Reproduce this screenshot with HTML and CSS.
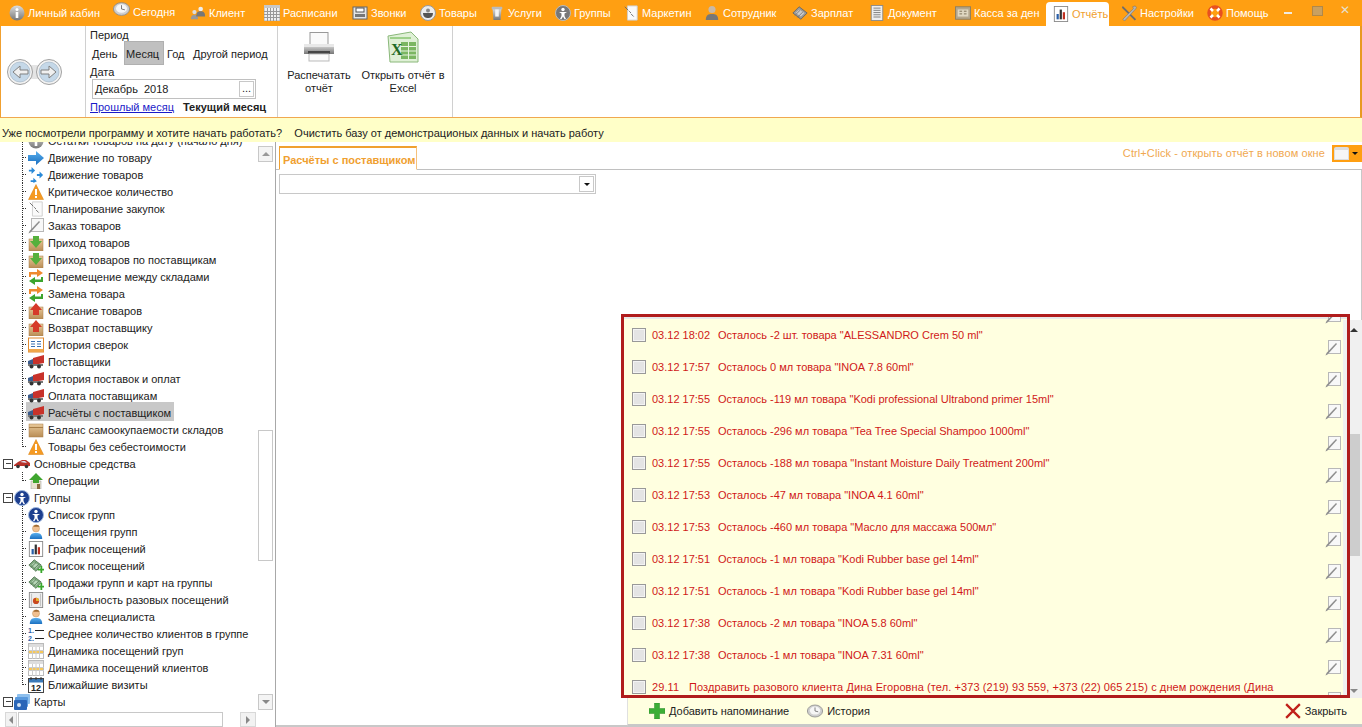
FILE: index.html
```html
<!DOCTYPE html>
<html lang="ru">
<head>
    <meta charset="UTF-8">
    <title>Отчёты</title>
    <link rel="stylesheet" href="styles.css">
</head>
<body>
    <!-- icon set -->
    <svg class="defs" width="0" height="0">
        <defs>
            <linearGradient id="g-box" x1="0" y1="0" x2="0" y2="1"><stop offset="0" stop-color="#e8c99a"/><stop offset="1" stop-color="#b98d55"/></linearGradient>
            <linearGradient id="g-gray" x1="0" y1="0" x2="0" y2="1"><stop offset="0" stop-color="#dcdcdc"/><stop offset="1" stop-color="#777"/></linearGradient>
            <linearGradient id="g-blue" x1="0" y1="0" x2="0" y2="1"><stop offset="0" stop-color="#5ab0ee"/><stop offset="1" stop-color="#1a6fc0"/></linearGradient>
            <symbol id="i-info" viewBox="0 0 16 16"><circle cx="8" cy="8" r="7.5" fill="url(#g-gray)"/><circle cx="8" cy="4.5" r="1.5" fill="#fff"/><rect x="6.7" y="7" width="2.6" height="6" fill="#fff"/></symbol>
            <symbol id="i-clock" viewBox="0 0 20 16"><ellipse cx="10" cy="8" rx="9.5" ry="7.5" fill="#cfcfcf" stroke="#8a8a8a"/><ellipse cx="10" cy="7.5" rx="6.5" ry="5" fill="#f6f6f6"/><path d="M10 3.5V8l4 1" stroke="#666" fill="none"/></symbol>
            <symbol id="i-people" viewBox="0 0 18 16"><circle cx="5" cy="7" r="2.4" fill="#ddd"/><path d="M1 15c0-4 2-5 4-5s4 1 4 5z" fill="#999"/><circle cx="12" cy="3.5" r="2.6" fill="#eee"/><path d="M7 12c0-5 2-6 5-6s5 1 5 6z" fill="#777"/></symbol>
            <symbol id="i-grid" viewBox="0 0 16 16"><rect width="16" height="16" fill="#f0f0f0" stroke="#aaa"/><rect y="0" width="16" height="3" fill="#c8c8c8"/><path d="M0 6.500h16M0 9.500h16M0 12.500h16M3.500 3v13M6.500 3v13M9.500 3v13M12.500 3v13" stroke="#999"/></symbol>
            <symbol id="i-phone" viewBox="0 0 16 16"><rect x="1" y="2" width="14" height="12" fill="#e5e5e5" stroke="#666"/><rect x="4" y="3" width="8" height="4" fill="#fff" stroke="#555"/><rect x="3" y="9" width="10" height="3" fill="#777"/></symbol>
            <symbol id="i-bowl" viewBox="0 0 16 16"><circle cx="8" cy="8" r="7.5" fill="#ececec" stroke="#999"/><path d="M3 8h10c0 4-2.500 5-5 5S3 12 3 8z" fill="#555"/><circle cx="8" cy="5.500" r="2" fill="#888"/></symbol>
            <symbol id="i-service" viewBox="0 0 16 18"><path d="M3 4h10l-1 13H4z" fill="url(#g-gray)"/><rect x="2" y="2" width="12" height="3" rx="1" fill="#bbb"/><rect x="6" y="5" width="4" height="8" fill="#f4f4f4"/></symbol>
            <symbol id="i-group-gray" viewBox="0 0 16 16"><circle cx="8" cy="8" r="7.500" fill="#777" stroke="#bbb"/><circle cx="8" cy="4.500" r="1.700" fill="#fff"/><path d="M4 7h8l-2.500 1.500V11l1.500 3H9.500L8 11.500 6.500 14H5l1.500-3V8.500z" fill="#fff"/></symbol>
            <symbol id="i-group" viewBox="0 0 16 16"><circle cx="8" cy="8" r="7.500" fill="#1d3f8f" stroke="#9db6dd"/><circle cx="8" cy="4.500" r="1.700" fill="#fff"/><path d="M4 7h8l-2.500 1.500V11l1.500 3H9.500L8 11.500 6.500 14H5l1.500-3V8.500z" fill="#fff"/></symbol>
            <symbol id="i-plan" viewBox="0 0 16 18"><path d="M4 1h11v16H4z" fill="#fafafa" stroke="#ccc"/><path d="M1 2l4 4M6 7l2 2M8 10l3 3" stroke="#666"/></symbol>
            <symbol id="i-person-gray" viewBox="0 0 16 18"><circle cx="8" cy="5" r="4" fill="#c9b9a8"/><path d="M1 17c0-6 3-7 7-7s7 1 7 7z" fill="#777"/></symbol>
            <symbol id="i-person" viewBox="0 0 16 18"><circle cx="8" cy="5" r="4" fill="#f0c090" stroke="#b98c50" stroke-width=".5"/><path d="M5 3c1-3 6-3 7 0-2 0-5 0-7 0z" fill="#a06a30"/><path d="M1 17c0-6 3-7 7-7s7 1 7 7z" fill="url(#g-blue)"/></symbol>
            <symbol id="i-money-gray" viewBox="0 0 18 16"><path d="M1 8l7-7 9 7-7 7z" fill="#999" stroke="#666"/><path d="M4 8l4-4 6 4-4 4z" fill="#ccc"/><path d="M3 11l6-6M6 13l6-6" stroke="#777"/></symbol>
            <symbol id="i-money" viewBox="0 0 18 16"><path d="M1 7l6-6 8 6-6 7z" fill="#7fa87f" stroke="#557a55"/><path d="M4 7l3-3 5 3-3 4z" fill="#b9d6b9"/><path d="M3 10l6-6M6 12l6-6" stroke="#557a55"/><path d="M11 11h3V8h2v3h2v2h-2v3h-2v-3h-3z" fill="#39a72c"/></symbol>
            <symbol id="i-doc" viewBox="0 0 14 18"><rect x=".5" y=".5" width="13" height="17" fill="#eee" stroke="#888"/><path d="M3 3.500h8M3 6h8M3 8.500h8M3 11h8M3 13.500h8" stroke="#777"/></symbol>
            <symbol id="i-cash" viewBox="0 0 18 16"><rect x=".5" y="1" width="17" height="14" fill="#b3a68c" stroke="#8a7c60"/><rect x="3" y="4" width="12" height="8" fill="#e0d8c2"/><path d="M5 6h3M10 6h3M5 9h3M10 9h3" stroke="#776a50"/></symbol>
            <symbol id="i-chart" viewBox="0 0 16 18"><rect x=".5" y=".5" width="15" height="17" fill="#fff" stroke="#888"/><rect x="3" y="9" width="2.500" height="6" fill="#2a5fa8"/><rect x="6.500" y="4" width="2.500" height="11" fill="#333"/><rect x="10" y="7" width="2.500" height="8" fill="#c03020"/></symbol>
            <symbol id="i-tools" viewBox="0 0 18 18"><path d="M2 1l15 15-1.500 1.500L1 3z" fill="#6d6d6d"/><path d="M16 1l-3 1 1 2-12 12 2 2L16 5l1.500-2z" fill="#b3b3b3" stroke="#666" stroke-width=".5"/></symbol>
            <symbol id="i-buoy" viewBox="0 0 16 16"><circle cx="8" cy="8" r="6" fill="none" stroke="#e8501f" stroke-width="3.500"/><path d="M3.500 3.500l2.500 2.500M12.500 3.500L10 6M3.500 12.500L6 10M12.500 12.500L10 10" stroke="#fff" stroke-width="2.500"/></symbol>
            <symbol id="i-back" viewBox="0 0 26 26"><circle cx="13" cy="13" r="12.500" fill="#f2f2f2" stroke="#a0a0a0"/><circle cx="13" cy="13" r="10" fill="#c5d8e8" stroke="#8fa5b8" stroke-width=".5"/><path d="M21 11h-8V7l-7 6 7 6v-4h8z" fill="#f0f0f0" stroke="#808080"/></symbol>
            <symbol id="i-arrow" viewBox="0 0 16 16"><path d="M0 5h8V1l8 7-8 7v-4H0z" fill="url(#g-blue)"/></symbol>
            <symbol id="i-arrows" viewBox="0 0 16 18"><path d="M0 3h3V0l4 4-4 4V5H0zM9 8h3V5l4 4-4 4v-3H9zM2 15h3v-3l4 4-4 2v-1H2z" fill="#2a8ad8"/></symbol>
            <symbol id="i-warn" viewBox="0 0 16 16"><path d="M8 .500L15.500 15.500H.5z" fill="#f59a23" stroke="#d98010" stroke-width=".5"/><rect x="7" y="5" width="2" height="6" fill="#fff"/><rect x="7" y="12" width="2" height="2" fill="#fff"/></symbol>
            <symbol id="i-pencil" viewBox="0 0 16 16"><rect x="3.500" y=".5" width="12" height="13" fill="#f8f8f8" stroke="#b8b8b8"/><path d="M.5 15.500l2-1L12 4l-1-1L1.500 13z" fill="#8f8f8f"/></symbol>
            <symbol id="i-box-in" viewBox="0 0 16 16"><rect x="1" y="4" width="14" height="12" fill="url(#g-box)" stroke="#a87e48" stroke-width=".5"/><path d="M5 1h6v5h3l-6 7-6-7h3z" fill="#55b03c"/></symbol>
            <symbol id="i-swap" viewBox="0 0 16 16"><path d="M1 3h8V0l6 4-6 4V5.500H3V8H1z" fill="#ef8a2e"/><path d="M15 13H7v3l-6-4 6-4v2.500h6V8h2z" fill="#3ca52e"/></symbol>
            <symbol id="i-box-out" viewBox="0 0 16 16"><rect x="1" y="4" width="14" height="12" fill="url(#g-box)" stroke="#a87e48" stroke-width=".5"/><path d="M8 0l6 7h-3v5H5V7H2z" fill="#d63a2a"/></symbol>
            <symbol id="i-calc" viewBox="0 0 16 16"><rect x=".5" y="1" width="15" height="14" fill="#fff" stroke="#e08a30"/><rect x=".5" y="12" width="15" height="3" fill="#f0a64a"/><path d="M3 4.500h4M9 4.500h4M3 7h4M9 7h4M3 9.500h4M9 9.500h4" stroke="#3c70b0"/></symbol>
            <symbol id="i-truck" viewBox="0 0 16 14"><path d="M5 3l11-3v8L5 10z" fill="#c8322a"/><path d="M0 6l5-2v6H0z" fill="#3c5c8c"/><rect y="9" width="15" height="2" fill="#777"/><circle cx="3.500" cy="11.500" r="2" fill="#333"/><circle cx="11" cy="11.500" r="2" fill="#333"/></symbol>
            <symbol id="i-box" viewBox="0 0 16 16"><rect x="1" y="2" width="14" height="13" fill="url(#g-box)" stroke="#a87e48" stroke-width=".5"/><path d="M1 5.500h14" stroke="#a87e48"/></symbol>
            <symbol id="i-car" viewBox="0 0 16 10"><path d="M0 6l4-3 4-2h4l4 3v3H0z" fill="#b8322a"/><path d="M6 3l3-1h2l2 2z" fill="#dde"/><circle cx="4" cy="7.500" r="1.800" fill="#333"/><circle cx="12.500" cy="7.500" r="1.800" fill="#333"/></symbol>
            <symbol id="i-house" viewBox="0 0 16 16"><path d="M3 8h10v8H3z" fill="#e8e2d0" stroke="#999" stroke-width=".5"/><path d="M1 7l7-7 7 7h-4v3H5V7z" fill="#3fa52e"/><rect x="9" y="11" width="3" height="5" fill="#8a6a40"/></symbol>
            <symbol id="i-pie" viewBox="0 0 16 18"><rect x=".5" y=".5" width="15" height="17" fill="#eee" stroke="#888"/><path d="M3 2v14M13 2v14" stroke="#bbb"/><circle cx="8" cy="10" r="3.500" fill="#c9491f"/><path d="M8 10V6.500a3.500 3.500 0 0 1 3.500 3.500z" fill="#e5b431"/></symbol>
            <symbol id="i-list" viewBox="0 0 16 16"><text x="0" y="7" font-size="7" font-weight="bold" fill="#2a5fa8" font-family="Liberation Sans">1.</text><text x="0" y="15" font-size="7" font-weight="bold" fill="#2a5fa8" font-family="Liberation Sans">2.</text><path d="M7 4.500h9M7 12.500h9" stroke="#222"/></symbol>
            <symbol id="i-table" viewBox="0 0 16 16"><rect x=".5" y=".5" width="15" height="15" fill="#fff" stroke="#bbb"/><rect x="1" y="1" width="14" height="3" fill="#ddd"/><rect x="1" y="7" width="14" height="4" fill="#f6c85a"/><path d="M0 7.500h16M0 10.500h16M4.500 4v12M8 4v12M11.500 4v12" stroke="#ccc"/></symbol>
            <symbol id="i-cal" viewBox="0 0 16 16"><rect x=".5" y="1.500" width="15" height="14" fill="#fff" stroke="#444"/><rect x="1" y="2" width="14" height="3.500" fill="#3a79b8"/><path d="M3 0v3M8 0v3M13 0v3" stroke="#333"/><text x="8" y="14" text-anchor="middle" font-size="9" font-weight="bold" fill="#222" font-family="Liberation Sans">12</text></symbol>
            <symbol id="i-cards" viewBox="0 0 16 16"><rect x="3" y="0" width="13" height="10" rx="1" fill="#8ec0ee"/><rect x="1" y="3" width="13" height="10" rx="1" fill="#5a9ade"/><rect y="6" width="13" height="10" rx="1" fill="#2a66b8"/><circle cx="5" cy="11" r="2" fill="#cfe2f6"/></symbol>
            <symbol id="i-printer" viewBox="0 0 32 30"><rect x="7" y=".5" width="18" height="12" fill="#fafafa" stroke="#999"/><path d="M1 13h30v9H1z" fill="url(#g-gray)"/><rect x="1" y="12" width="30" height="3" fill="#e8e8e8"/><rect x="5" y="19" width="22" height="3" fill="#444"/><rect x="6" y="22" width="20" height="7" fill="#fafafa" stroke="#bbb"/></symbol>
            <symbol id="i-excel" viewBox="0 0 32 32"><path d="M1 5L24 1l7 7v23H3z" fill="#dff0d6" stroke="#8ab87a"/><path d="M3 7h21" stroke="#9ed08a" stroke-width="2"/><rect x="14" y="11" width="15" height="17" fill="#7bb661"/><path d="M14 15.500h15M14 20h15M14 24h15M21.500 11v17" stroke="#e8f4e0"/><text x="4" y="24" font-size="16" font-weight="bold" fill="#1f6b26" font-family="Liberation Serif">X</text></symbol>
            <symbol id="i-plus" viewBox="0 0 16 16"><path d="M5.500 0h5v5.500H16v5h-5.500V16h-5v-5.500H0v-5h5.500z" fill="#3cae36" stroke="#2a8a28" stroke-width=".5"/></symbol>
            <symbol id="i-close" viewBox="0 0 14 14"><path d="M1 1l12 12M13 1L1 13" stroke="#c0201a" stroke-width="2"/></symbol>
        </defs>
    </svg>

    <nav class="topbar">
        <a class="tab w-lk"><svg class="ico"><use href="#i-info"/></svg>Личный кабин</a>
        <a class="tab w-today up"><svg class="ico"><use href="#i-clock"/></svg>Сегодня</a>
        <a class="tab w-client"><svg class="ico"><use href="#i-people"/></svg>Клиент</a>
        <a class="tab w-sched"><svg class="ico"><use href="#i-grid"/></svg>Расписани</a>
        <a class="tab w-calls"><svg class="ico"><use href="#i-phone"/></svg>Звонки</a>
        <a class="tab w-goods"><svg class="ico"><use href="#i-bowl"/></svg>Товары</a>
        <a class="tab w-serv"><svg class="ico"><use href="#i-service"/></svg>Услуги</a>
        <a class="tab w-groups"><svg class="ico"><use href="#i-group-gray"/></svg>Группы</a>
        <a class="tab w-market"><svg class="ico"><use href="#i-plan"/></svg>Маркетин</a>
        <a class="tab w-staff"><svg class="ico"><use href="#i-person-gray"/></svg>Сотрудник</a>
        <a class="tab w-salary"><svg class="ico"><use href="#i-money-gray"/></svg>Зарплат</a>
        <a class="tab w-docs"><svg class="ico"><use href="#i-doc"/></svg>Документ</a>
        <a class="tab w-cash"><svg class="ico"><use href="#i-cash"/></svg>Касса за ден</a>
        <a class="tab active"><svg class="ico"><use href="#i-chart"/></svg>Отчёть</a>
        <a class="tab w-settings"><svg class="ico"><use href="#i-tools"/></svg>Настройки</a>
        <a class="tab w-help"><svg class="ico"><use href="#i-buoy"/></svg>Помощь</a>
        <div class="winctl">
            <span class="win-min"></span>
            <span class="win-max"></span>
            <span class="win-close">✕</span>
        </div>
    </nav>

    <section class="ribbon">
        <div class="rb-nav">
            <div class="nav-pill">
                <svg class="nav-btn"><use href="#i-back"/></svg>
                <svg class="nav-btn flip"><use href="#i-back"/></svg>
            </div>
        </div>
        <div class="rb-period">
            <div class="lbl">Период</div>
            <div class="period-row">
                <span class="pbtn p-day">День</span>
                <span class="pbtn p-month on">Месяц</span>
                <span class="pbtn p-year">Год</span>
                <span class="pbtn p-other">Другой период</span>
            </div>
            <div class="lbl">Дата</div>
            <div class="date-box"><span>Декабрь&nbsp; 2018</span><span class="dots">...</span></div>
            <div class="links"><a href="#">Прошлый месяц</a><b>Текущий месяц</b></div>
        </div>
        <div class="rb-actions">
            <div class="bigbtn b-print"><svg class="big-ico"><use href="#i-printer"/></svg>Распечатать<br>отчёт</div>
            <div class="bigbtn b-excel"><svg class="big-ico"><use href="#i-excel"/></svg>Открыть отчёт в<br>Excel</div>
        </div>
    </section>

    <div class="notice">Уже посмотрели программу и хотите начать работать?&nbsp;&nbsp;&nbsp; Очистить базу от демонстрационых данных и начать работу</div>

    <main class="content">
        <aside class="side">
            <div class="tree-wrap">
                <ul class="tree">
                    <li class="leaf"><svg class="ico"><use href="#i-info"/></svg>Остатки товаров на дату (начало дня)</li>
                    <li class="leaf"><svg class="ico"><use href="#i-arrow"/></svg>Движение по товару</li>
                    <li class="leaf"><svg class="ico"><use href="#i-arrows"/></svg>Движение товаров</li>
                    <li class="leaf"><svg class="ico"><use href="#i-warn"/></svg>Критическое количество</li>
                    <li class="leaf"><svg class="ico"><use href="#i-plan"/></svg>Планирование закупок</li>
                    <li class="leaf"><svg class="ico"><use href="#i-pencil"/></svg>Заказ товаров</li>
                    <li class="leaf"><svg class="ico"><use href="#i-box-in"/></svg>Приход товаров</li>
                    <li class="leaf"><svg class="ico"><use href="#i-box-in"/></svg>Приход товаров по поставщикам</li>
                    <li class="leaf"><svg class="ico"><use href="#i-swap"/></svg>Перемещение между складами</li>
                    <li class="leaf"><svg class="ico"><use href="#i-swap"/></svg>Замена товара</li>
                    <li class="leaf"><svg class="ico"><use href="#i-box-out"/></svg>Списание товаров</li>
                    <li class="leaf"><svg class="ico"><use href="#i-box-out"/></svg>Возврат поставщику</li>
                    <li class="leaf"><svg class="ico"><use href="#i-calc"/></svg>История сверок</li>
                    <li class="leaf"><svg class="ico"><use href="#i-truck"/></svg>Поставщики</li>
                    <li class="leaf"><svg class="ico"><use href="#i-truck"/></svg>История поставок и оплат</li>
                    <li class="leaf"><svg class="ico"><use href="#i-truck"/></svg>Оплата поставщикам</li>
                    <li class="leaf"><span class="sel"></span><svg class="ico"><use href="#i-truck"/></svg>Расчёты с поставщиком</li>
                    <li class="leaf"><svg class="ico"><use href="#i-box"/></svg>Баланс самоокупаемости складов</li>
                    <li class="leaf last"><svg class="ico"><use href="#i-warn"/></svg>Товары без себестоимости</li>
                    <li class="root"><span class="exp"></span><svg class="ico"><use href="#i-car"/></svg>Основные средства</li>
                    <li class="leaf last"><svg class="ico"><use href="#i-house"/></svg>Операции</li>
                    <li class="root"><span class="exp"></span><svg class="ico"><use href="#i-group"/></svg>Группы</li>
                    <li class="leaf"><svg class="ico"><use href="#i-group"/></svg>Список групп</li>
                    <li class="leaf"><svg class="ico"><use href="#i-person"/></svg>Посещения групп</li>
                    <li class="leaf"><svg class="ico"><use href="#i-chart"/></svg>График посещений</li>
                    <li class="leaf"><svg class="ico"><use href="#i-money"/></svg>Список посещений</li>
                    <li class="leaf"><svg class="ico"><use href="#i-money"/></svg>Продажи групп и карт на группы</li>
                    <li class="leaf"><svg class="ico"><use href="#i-pie"/></svg>Прибыльность разовых посещений</li>
                    <li class="leaf"><svg class="ico"><use href="#i-person"/></svg>Замена специалиста</li>
                    <li class="leaf"><svg class="ico"><use href="#i-list"/></svg>Среднее количество клиентов в группе</li>
                    <li class="leaf"><svg class="ico"><use href="#i-table"/></svg>Динамика посещений груп</li>
                    <li class="leaf"><svg class="ico"><use href="#i-table"/></svg>Динамика посещений клиентов</li>
                    <li class="leaf last"><svg class="ico"><use href="#i-cal"/></svg>Ближайшие визиты</li>
                    <li class="root"><span class="exp"></span><svg class="ico"><use href="#i-cards"/></svg>Карты</li>
                </ul>
                <div class="vscroll">
                    <span class="sbtn"><i class="tri up-tri"></i></span>
                    <div class="vtrack"><div class="vthumb"></div></div>
                    <span class="sbtn"><i class="tri down-tri gray"></i></span>
                </div>
            </div>
            <div class="hscroll">
                <span class="hbtn"><i class="tri left-tri"></i></span>
                <div class="hthumb"></div>
                <span class="hbtn"><i class="tri right-tri"></i></span>
            </div>
        </aside>

        <section class="report">
            <div class="report-head">
                <div class="report-tab">Расчёты с поставщиком</div>
                <div class="head-right">
                    <span class="hint">Ctrl+Click - открыть отчёт в новом окне</span>
                    <span class="win-btn"><i class="mini-win"></i><i class="tri down-tri"></i></span>
                </div>
            </div>
            <div class="report-body">
                <div class="combo"><span class="combo-btn"><i class="tri down-tri"></i></span></div>
            </div>
        </section>
    </main>

    <!-- reminders popup, lies over the report -->
    <div class="reminders">
        <div class="rem-frame">
            <ul class="rem-list">
                <li class="rem rem-prev"><svg class="rem-edit"><use href="#i-pencil"/></svg></li>
                <li class="rem"><span class="chk"></span><span class="rem-time">03.12 18:02</span>Осталось -2 шт. товара "ALESSANDRO Crem 50 ml"<svg class="rem-edit"><use href="#i-pencil"/></svg></li>
                <li class="rem"><span class="chk"></span><span class="rem-time">03.12 17:57</span>Осталось 0 мл товара "INOA 7.8 60ml"<svg class="rem-edit"><use href="#i-pencil"/></svg></li>
                <li class="rem"><span class="chk"></span><span class="rem-time">03.12 17:55</span>Осталось -119 мл товара "Kodi professional Ultrabond primer 15ml"<svg class="rem-edit"><use href="#i-pencil"/></svg></li>
                <li class="rem"><span class="chk"></span><span class="rem-time">03.12 17:55</span>Осталось -296 мл товара "Tea Tree Special Shampoo 1000ml"<svg class="rem-edit"><use href="#i-pencil"/></svg></li>
                <li class="rem"><span class="chk"></span><span class="rem-time">03.12 17:55</span>Осталось -188 мл товара "Instant Moisture Daily Treatment 200ml"<svg class="rem-edit"><use href="#i-pencil"/></svg></li>
                <li class="rem"><span class="chk"></span><span class="rem-time">03.12 17:53</span>Осталось -47 мл товара "INOA 4.1 60ml"<svg class="rem-edit"><use href="#i-pencil"/></svg></li>
                <li class="rem"><span class="chk"></span><span class="rem-time">03.12 17:53</span>Осталось -460 мл товара "Масло для массажа 500мл"<svg class="rem-edit"><use href="#i-pencil"/></svg></li>
                <li class="rem"><span class="chk"></span><span class="rem-time">03.12 17:51</span>Осталось -1 мл товара "Kodi Rubber base gel 14ml"<svg class="rem-edit"><use href="#i-pencil"/></svg></li>
                <li class="rem"><span class="chk"></span><span class="rem-time">03.12 17:51</span>Осталось -1 мл товара "Kodi Rubber base gel 14ml"<svg class="rem-edit"><use href="#i-pencil"/></svg></li>
                <li class="rem"><span class="chk"></span><span class="rem-time">03.12 17:38</span>Осталось -2 мл товара "INOA 5.8 60ml"<svg class="rem-edit"><use href="#i-pencil"/></svg></li>
                <li class="rem"><span class="chk"></span><span class="rem-time">03.12 17:38</span>Осталось -1 мл товара "INOA 7.31 60ml"<svg class="rem-edit"><use href="#i-pencil"/></svg></li>
                <li class="rem rem-long"><span class="chk"></span><span class="rem-time">29.11</span>Поздравить разового клиента Дина Егоровна (тел. +373 (219) 93 559, +373 (22) 065 215) с днем рождения (Дина<svg class="rem-edit"><use href="#i-pencil"/></svg></li>
            </ul>
            <div class="rem-scroll">
                <i class="tri up-tri dark"></i>
                <div class="rem-thumb"></div>
                <i class="tri down-tri gray"></i>
            </div>
        </div>
        <div class="rem-foot">
            <span class="foot-btn"><svg class="ico"><use href="#i-plus"/></svg>Добавить напоминание</span>
            <span class="foot-btn"><svg class="ico"><use href="#i-clock"/></svg>История</span>
            <span class="foot-btn foot-close"><svg class="ico"><use href="#i-close"/></svg>Закрыть</span>
        </div>
    </div>
</body>
</html>
```

FILE: styles.css
```css
html, body {
    margin: 0;
    padding: 0;
    height: 727px;
    overflow: hidden;
}

body {
    font-family: "Liberation Sans", Arial, sans-serif;
    font-size: 11px;
    color: #222;
    background: #fff;
    position: relative;
}

ul {
    list-style: none;
    margin: 0;
    padding: 0;
}

.defs {
    position: absolute;
}

.ico {
    width: 16px;
    height: 16px;
    flex: none;
}

/* top tabs */
.topbar {
    display: flex;
    height: 26px;
    padding-left: 9px;
    background: #ff9f12;
    color: #fff;
    box-sizing: border-box;
}

.tab {
    display: flex;
    align-items: center;
    gap: 3px;
    flex: none;
    white-space: nowrap;
}

.tab.up .ico {
    width: 17px;
    margin-top: -6px;
}

.tab.up {
    padding-bottom: 3px;
    box-sizing: border-box;
}

.w-lk { width: 104px; }
.w-today { width: 77px; }
.w-client { width: 74px; }
.w-sched { width: 88px; }
.w-calls { width: 68px; }
.w-goods { width: 69px; }
.w-serv { width: 66px; }
.w-groups { width: 68px; }
.w-market { width: 81px; }
.w-staff { width: 88px; }
.w-salary { width: 77px; }
.w-docs { width: 86px; }
.w-cash { width: 91px; }
.w-settings { width: 87px; }
.w-help { width: 77px; }

.tab.w-settings {
    margin-left: 1px;
    margin-right: -1px;
}

.tab.active {
    width: 63px;
    height: 24px;
    margin-top: 2px;
    margin-right: 11px;
    padding-left: 7px;
    box-sizing: border-box;
    background: #fff;
    color: #f0a030;
    border-radius: 4px 4px 0 0;
    overflow: hidden;
}

.winctl {
    display: flex;
    align-items: center;
    gap: 20px;
    height: 20px;
}

.win-min {
    width: 8px;
    height: 2px;
    margin-top: 6px;
    background: #f0ebe0;
}

.win-max {
    width: 9px;
    height: 8px;
    margin-top: 2px;
    background: #c9a060;
    border: 1px solid #b08848;
}

.win-close {
    margin-left: -3px;
    color: #e8e0d0;
    font-size: 12px;
}

/* ribbon */
.ribbon {
    display: flex;
    height: 92px;
    box-sizing: border-box;
    border-left: 1px solid #f0a030;
    border-right: 2px solid #e89a20;
    border-bottom: 1px solid #f0a850;
}

.rb-nav {
    width: 85px;
    flex: none;
    padding-left: 6px;
    box-sizing: border-box;
    display: flex;
    align-items: center;
    border-right: 1px solid #d0d0d0;
}

.nav-pill {
    display: flex;
    gap: 3px;
    width: 55px;
    height: 26px;
    margin-top: 0;
    background: linear-gradient(#e4e4e4, #e4e4e4) center / 30px 14px no-repeat;
}

.nav-btn {
    width: 26px;
    height: 26px;
}

.nav-btn.flip {
    transform: scaleX(-1);
}

.rb-period {
    width: 192px;
    flex: none;
    padding: 2px 0 0 4px;
    box-sizing: border-box;
    border-right: 1px solid #d0d0d0;
}

.lbl {
    height: 14px;
    line-height: 14px;
}

.period-row {
    display: flex;
    height: 24px;
    margin-top: -1px;
    white-space: nowrap;
}

.pbtn {
    line-height: 26px;
    box-sizing: border-box;
}

.p-day {
    width: 34px;
    padding-left: 2px;
}

.p-month {
    width: 40px;
    padding-left: 2px;
}

.p-year {
    width: 25px;
    padding-left: 3px;
}

.p-other {
    padding-left: 4px;
}

.pbtn.on {
    background: #c0c0c0;
    box-shadow: inset 0 0 0 1px #b0b0b0;
}

.date-box {
    display: flex;
    justify-content: space-between;
    width: 164px;
    height: 20px;
    margin-left: 2px;
    padding: 1px 1px 1px 2px;
    box-sizing: border-box;
    line-height: 17px;
    border: 1px solid #c0c0c0;
}

.dots {
    width: 15px;
    height: 16px;
    text-align: center;
    line-height: 12px;
    border: 1px solid #c8c8c8;
    box-sizing: border-box;
}

.links {
    display: flex;
    gap: 9px;
    margin-top: 2px;
    white-space: nowrap;
}

.links a {
    color: #1a1ac8;
}

.rb-actions {
    display: flex;
    width: 175px;
    flex: none;
    box-sizing: border-box;
    border-right: 1px solid #d0d0d0;
    text-align: center;
    line-height: 13px;
}

.bigbtn {
    white-space: nowrap;
    padding-top: 5px;
}

.b-print {
    width: 82px;
}

.b-excel {
    width: 86px;
}

.big-ico {
    display: block;
    width: 32px;
    height: 32px;
    margin: 0 auto 6px;
}

/* demo data notice */
.notice {
    height: 24px;
    line-height: 30px;
    padding-left: 2px;
    background: #ffffc8;
    white-space: nowrap;
    overflow: hidden;
}

/* main area */
.content {
    display: flex;
    height: 585px;
}

.side {
    width: 275px;
    flex: none;
    height: 585px;
    overflow: hidden;
    border-right: 1px solid #a8a8a8;
}

.tree-wrap {
    display: flex;
    height: 570px;
    overflow: hidden;
}

.tree {
    width: 258px;
    flex: none;
    margin-top: -10px;
}

.tree li {
    display: flex;
    align-items: center;
    gap: 4px;
    height: 17px;
    white-space: nowrap;
    position: relative;
}

.leaf {
    padding-left: 28px;
}

.root {
    padding-left: 3px;
}

.leaf::before {
    content: "";
    position: absolute;
    left: 22px;
    top: 0;
    bottom: 0;
    border-left: 1px dotted #333;
}

.leaf.last::before {
    bottom: 8px;
}

.leaf::after {
    content: "";
    position: absolute;
    left: 23px;
    top: 8px;
    width: 3px;
    border-top: 1px dotted #333;
}

/* selection bar sits behind the row */
.sel {
    position: absolute;
    left: 26px;
    top: -2px;
    width: 148px;
    height: 19px;
    background: #c8c8c8;
    z-index: -1;
}

.exp {
    width: 8px;
    height: 8px;
    flex: none;
    margin-right: -3px;
    border: 1px solid #444;
    background: linear-gradient(#444, #444) center / 5px 1px no-repeat #fff;
}

.vscroll {
    width: 16px;
    margin: 4px 0 2px 0;
    display: flex;
    flex-direction: column;
}

.sbtn {
    display: flex;
    align-items: center;
    justify-content: center;
    width: 15px;
    height: 16px;
    flex: none;
    border: 1px solid #c8c8c8;
    box-sizing: border-box;
    background: #f4f4f4;
}

.vtrack {
    flex: 1;
    padding-top: 268px;
    padding-bottom: 133px;
    box-sizing: border-box;
}

.vthumb {
    width: 15px;
    height: 100%;
    box-sizing: border-box;
    border: 1px solid #c8c8c8;
}

.hscroll {
    display: flex;
    height: 15px;
    padding: 0 0 0 5px;
}

.hbtn {
    display: flex;
    align-items: center;
    justify-content: center;
    width: 12px;
    height: 15px;
    flex: none;
    box-sizing: border-box;
    border: 1px solid #d8d8d8;
    background: #f2f2f2;
}

.hbtn:last-child {
    width: 16px;
    margin-left: 17px;
}

.hthumb {
    width: 205px;
    margin-left: 1px;
    box-sizing: border-box;
    border: 1px solid #c8c8c8;
}

.tri {
    display: block;
    width: 0;
    height: 0;
    border: 4px solid transparent;
}

.up-tri {
    border-top: 0;
    border-bottom-color: #999;
}

.down-tri {
    border-bottom: 0;
    border-top-color: #111;
}

.left-tri {
    border-left: 0;
    border-right-color: #888;
}

.right-tri {
    border-right: 0;
    border-left-color: #888;
}

.tri.dark {
    border-bottom-color: #333;
}

.tri.gray {
    border-top-color: #888;
}

/* report */
.report {
    flex: 1;
    min-width: 0;
    display: flex;
    flex-direction: column;
}

.report-head {
    display: flex;
    justify-content: space-between;
    height: 28px;
    padding: 4px 0 0 3px;
    box-sizing: border-box;
    border-bottom: 1px solid #c0c0c0;
}

.report-tab {
    width: 138px;
    height: 24px;
    line-height: 25px;
    box-sizing: border-box;
    padding-left: 3px;
    border: 1px solid #f6c27c;
    border-left-color: #f0a030;
    border-top: 2px solid #f0a030;
    border-bottom: 1px solid #fff;
    color: #f0a030;
    font-weight: bold;
    white-space: nowrap;
}

.head-right {
    display: flex;
    gap: 7px;
    margin-top: -1px;
    height: 17px;
}

.hint {
    line-height: 17px;
    color: #f0a850;
    letter-spacing: .1px;
}

.win-btn {
    display: flex;
    align-items: center;
    gap: 3px;
    width: 30px;
    height: 17px;
    padding-left: 2px;
    box-sizing: border-box;
    background: #ff9f12;
}

.win-btn .tri {
    border-width: 3px;
    border-bottom: 0;
}

.mini-win {
    display: block;
    flex: none;
    width: 15px;
    height: 13px;
    box-sizing: border-box;
    background: #f6f6f6;
    border: 1px solid #ddd;
    border-top: 3px solid #ddd;
    border-radius: 2px 2px 0 0;
}

.report-body {
    flex: 1;
    padding: 4px 0 0 3px;
    border-right: 1px solid #c8c8c8;
    border-bottom: 2px solid #c8c8c8;
}

.combo {
    display: flex;
    justify-content: flex-end;
    align-items: center;
    width: 317px;
    height: 20px;
    padding-right: 1px;
    box-sizing: border-box;
    border: 1px solid #c8c8c8;
}

.combo-btn {
    display: flex;
    align-items: center;
    justify-content: center;
    width: 15px;
    height: 16px;
    box-sizing: border-box;
    border: 1px solid #c8c8c8;
}

.combo-btn .tri {
    border-width: 3px;
    border-bottom: 0;
}

/* reminders popup */
.reminders {
    position: absolute;
    left: 621px;
    top: 314px;
    width: 741px;
    height: 412px;
    display: flex;
    flex-direction: column;
}

.rem-frame {
    display: flex;
    height: 384px;
    width: 729px;
    padding: 3px;
    box-sizing: border-box;
    background: #ffffe0;
    position: relative;
}

/* red outline drawn above the scrollbar */
.rem-frame::after {
    content: "";
    position: absolute;
    inset: 0;
    border: 3px solid #b01c1c;
    pointer-events: none;
}

.rem-list {
    flex: 1;
    min-width: 0;
    overflow: hidden;
    padding: 1px 0 0 3px;
    box-shadow: inset 0 2px 0 #e8e8e8;
}

.rem {
    display: flex;
    align-items: center;
    height: 32px;
    color: #d01818;
    white-space: nowrap;
    position: relative;
}

.rem-prev {
    margin-top: -31px;
}

.chk {
    width: 12px;
    height: 12px;
    flex: none;
    margin: 0 6px 0 5px;
    border: 1px solid #999;
    background: #e4e4e4;
    box-shadow: inset 0 0 0 1px #f4f4f4;
}

.rem-time {
    display: inline-block;
    width: 66px;
    flex: none;
}

.rem-long {
    letter-spacing: .09px;
}

.rem-long .rem-time {
    width: 37px;
}

.rem-edit {
    position: absolute;
    right: 6px;
    top: 21px;
    width: 16px;
    height: 16px;
}

.rem-scroll {
    position: absolute;
    right: -12px;
    top: 6px;
    bottom: 0;
    width: 19px;
    padding: 8px 0 5px 2px;
    box-sizing: border-box;
    background: #f0f0f0;
    display: flex;
    flex-direction: column;
    align-items: center;
}

.rem-thumb {
    width: 13px;
    height: 122px;
    margin: 102px 0 auto;
    background: #cdcdcd;
}

.rem-foot {
    display: flex;
    align-items: center;
    height: 28px;
    width: 735px;
    box-sizing: border-box;
    padding-left: 21px;
    margin-left: 6px;
    background: #ffffe0;
    border-left: 1px solid #e0e0e0;
    border-bottom: 2px solid #c8c8c8;
    color: #222;
    gap: 18px;
}

.foot-btn {
    display: flex;
    align-items: center;
    gap: 4px;
    white-space: nowrap;
}

.foot-close {
    margin-left: auto;
    margin-right: 15px;
}
```
